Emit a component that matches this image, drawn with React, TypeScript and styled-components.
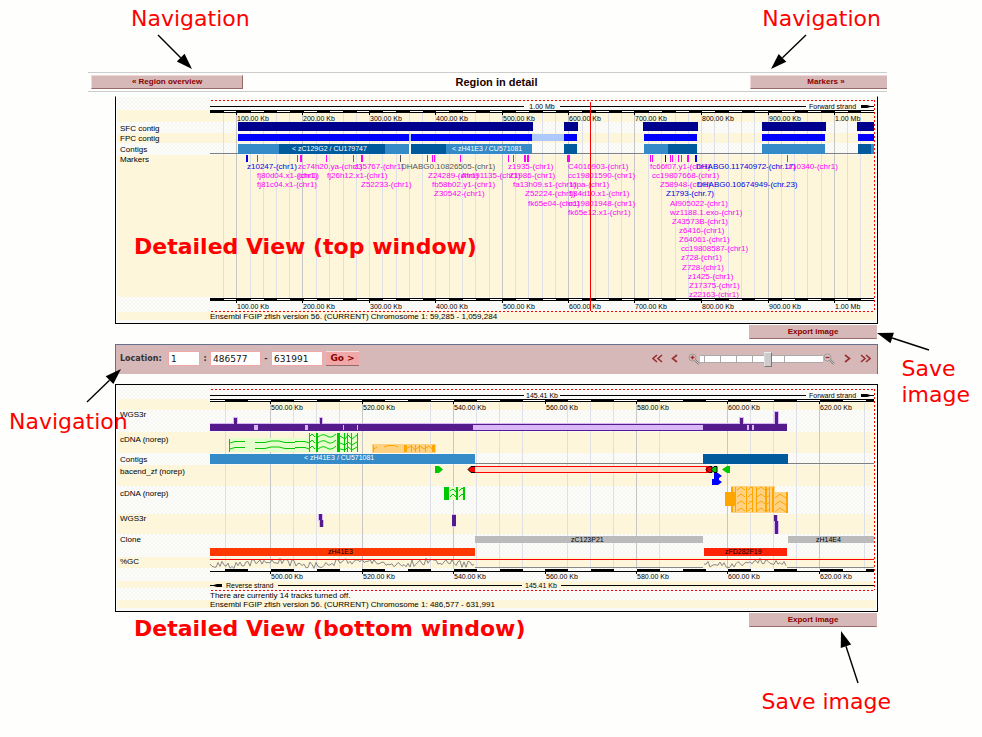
import React from 'react';
import styled, { createGlobalStyle, css } from 'styled-components';

const GlobalStyle = createGlobalStyle`
  * { box-sizing: border-box; }
  body { margin: 0; background: #fefefd; font-family: "Liberation Sans", Arial, sans-serif; color: #000; }
`;

const Page = styled.div`
  position: relative;
  min-height: 100vh;
  padding: 72px 95px 0 88px;
`;

const Heading = styled.header`
  display: grid;
  grid-template-columns: 155px 1fr 137px;
  align-items: center;
  height: 20px;
  border-top: 1px solid #ccc;
  border-bottom: 1px solid #ccc;
`;

const Title = styled.h1`
  margin: 0;
  font-size: 11px;
  line-height: 14px;
  text-align: center;
  color: #200000;
`;

const BarButton = styled.button`
  display: block;
  height: 14px;
  padding: 0;
  border: 1px solid;
  border-color: #f0d8d8 #946a6a #946a6a #f0d8d8;
  background: #d6b8b8;
  color: #8b0000;
  font: bold 8px/12px "Liberation Sans", Arial, sans-serif;
  text-align: center;
`;

const OverviewButton = styled(BarButton)`
  margin-left: 3px;
  width: 152px;
`;

const MarkersButton = styled(BarButton)`
  width: 137px;
  padding-left: 14px;
  border-right: 0;
`;

const Content = styled.main`
  display: flex;
  flex-direction: column;
  margin: 4px 9px 0 27px;
`;

const ExportButton = styled(BarButton)`
  align-self: flex-end;
  width: 128px;
  margin: 1px 1px 0 0;
  border-color: #d6b8b8 #d6b8b8 #946a6a #d6b8b8;
`;

const Panel = styled.section<{ $open?: boolean }>`
  position: relative;
  border: 1px solid #000;
  ${p => p.$open && css`border-top-color: transparent;`}
`;

const Track = styled.div<{ $h: number; $pad: number; $cream: boolean }>`
  height: ${p => p.$h}px;
  padding: ${p => p.$pad}px 0 0 3px;
  margin: 0 1px;
  font-size: 8px;
  line-height: 10px;
  white-space: nowrap;
  background: ${p => p.$cream
    ? '#fdf6da'
    : 'repeating-conic-gradient(#f7f7f3 0 25%, #fcfcfa 0 50%) 0 0 / 4px 4px'};
`;

const Plot = styled.svg`
  position: absolute;
  left: 94px;
  top: 0;
  width: calc(100% - 94px);
  height: 100%;
  overflow: visible;
  font-family: "Liberation Sans", Arial, sans-serif;
`;

const LocationBar = styled.form`
  display: flex;
  align-items: center;
  height: 30px;
  margin: 5px 0 10px;
  padding: 0 6px 2px 4px;
  border: 1px solid #66708c;
  border-bottom: 0;
  background: #d6b8b8;
  font: bold 8px/10px "DejaVu Sans", Verdana, sans-serif;
  color: #333;
`;

const Mark = styled.span`
  width: 10px;
  text-align: center;
`;

const Field = styled.input<{ $w: number }>`
  width: ${p => p.$w}px;
  height: 15px;
  padding: 0 0 0 2px;
  border: 1px solid #f0a8a8;
  border-radius: 0;
  background: #fff;
  color: #111;
  font: 9px/13px "DejaVu Sans", Verdana, sans-serif;
`;

const LocationLabel = styled.label`
  margin-right: 4px;
  width: 44px;
`;

const GoButton = styled.button`
  width: 33px;
  height: 15px;
  margin-left: 3px;
  padding: 0;
  border: 0;
  border-top: 1px solid #f8dcdc;
  border-bottom: 1px solid #946a6a;
  background: #f0a8a8;
  color: #8b0000;
  font: bold 9px/13px "DejaVu Sans", Verdana, sans-serif;
`;

const Controls = styled.div`
  display: flex;
  align-items: center;
  margin-left: auto;
`;

const IconButton = styled.button<{ $w: number; $gap: number }>`
  display: flex;
  width: ${p => p.$w}px;
  height: 14px;
  margin: 0 ${p => p.$gap}px 0 0;
  padding: 0;
  border: 0;
  background: none;
  align-items: center;
`;

const thumb = css`
  width: 8px;
  height: 15px;
  margin-top: -4px;
  border: 1px solid #999;
  border-color: #eee #777 #777 #ddd;
  border-radius: 0;
  background: #ccc;
`;

const Slider = styled.input`
  appearance: none;
  width: 123px;
  height: 15px;
  margin: 0;
  background: none;
  &::-webkit-slider-runnable-track {
    height: 8px;
    border-top: 1px solid #aaa;
    border-bottom: 1px solid #aaa;
    background: repeating-linear-gradient(90deg, transparent 0 15px, #aaa 15px 16px) 5px 0 / 82px 100% no-repeat,
      linear-gradient(90deg, transparent 4px, #aaa 4px 5px, transparent 5px) #fff;
  }
  &::-webkit-slider-thumb { appearance: none; ${thumb} }
`;

const Note = styled.p<{ $top: number; $left?: number; $right?: number; $strong?: boolean }>`
  position: absolute;
  top: ${p => p.$top}px;
  ${p => (p.$right === undefined ? `left: ${p.$left}px;` : `right: ${p.$right}px;`)}
  margin: 0;
  font-family: "DejaVu Sans", Verdana, sans-serif;
  font-size: 22px;
  line-height: 26px;
  font-weight: ${p => (p.$strong ? 'bold' : 'normal')};
  color: #f00;
  white-space: nowrap;
  pointer-events: none;
`;

const ArrowBox = styled.svg<{ $top: number; $left?: number; $right?: number }>`
  position: absolute;
  top: ${p => p.$top}px;
  ${p => (p.$right === undefined ? `left: ${p.$left}px;` : `right: ${p.$right}px;`)}
  overflow: visible;
  pointer-events: none;
`;

type ArrowProps = { dx: number; dy: number; top: number; left?: number; right?: number };

/* An arrow whose tail is dx, dy away from its tip. */
function Arrow({ dx, dy, top, left, right }: ArrowProps) {
  const w = Math.abs(dx);
  const h = Math.abs(dy);
  const tx = dx > 0 ? 0 : w;
  const ty = dy > 0 ? 0 : h;
  const len = Math.hypot(dx, dy);
  const ux = dx / len;
  const uy = dy / len;
  const bx = tx + ux * 16;
  const by = ty + uy * 16;
  return (
    <ArrowBox $top={top} $left={left} $right={right} width={w} height={h} aria-hidden="true">
      <line x1={tx + dx} y1={ty + dy} x2={bx} y2={by} stroke="#000" strokeWidth="1.4" />
      <path d={`M${tx} ${ty}L${bx - uy * 5.5} ${by + ux * 5.5}L${bx + uy * 5.5} ${by - ux * 5.5}Z`} />
    </ArrowBox>
  );
}

/* Horizontal plot positions scale with the width of the plot. */
const X0 = 210;
const SPAN = 667;
const X = (v: number) => `${((v - X0) / SPAN) * 100}%`;
const W = (v: number) => `${(v / SPAN) * 100}%`;

type Bar = [number, number, string];

function Bars({ y, h, items }: { y: number; h: number; items: Bar[] }) {
  return (
    <g shapeRendering="crispEdges">
      {items.map(([a, b, c], i) => (
        <rect key={i} x={X(a)} y={y} width={W(b - a)} height={h} fill={c} />
      ))}
    </g>
  );
}

function Label({ x, y, size = 8, fill = '#000', children }: {
  x: number; y: number; size?: number; fill?: string; children: React.ReactNode;
}) {
  return <text x={X(x)} y={y} fontSize={size} fill={fill}>{children}</text>;
}

function Glyph({ x, y, children }: { x: number; y: number; children: React.ReactNode }) {
  return <svg x={X(x)} y={y} width="1" height="1" overflow="visible">{children}</svg>;
}

function Grid({ xs, strong, y, h }: { xs: number[]; strong: number[]; y: number; h: number }) {
  return (
    <Bars y={y} h={h} items={[
      ...xs.map((x): Bar => [x, x + 1, '#dfdfe6']),
      ...strong.map((x): Bar => [x, x + 1, '#c6c6c6']),
    ]} />
  );
}

function Dots({ top, bottom }: { top: number; bottom: number }) {
  const p = { stroke: '#f00', strokeDasharray: '2 2', shapeRendering: 'crispEdges' as const };
  return (
    <>
      <line {...p} x1={X(211)} x2={X(875)} y1={top + 0.5} y2={top + 0.5} />
      <line {...p} x1={X(211)} x2={X(875)} y1={bottom + 0.5} y2={bottom + 0.5} />
      <line {...p} x1={X(874.5)} x2={X(874.5)} y1={top} y2={bottom} />
    </>
  );
}

function ForwardStrand({ y, text }: { y: number; text: string }) {
  return (
    <>
      <Bars y={y} h={1} items={[[210, 524, '#000'], [560, 806, '#000'], [865, 874, '#000']]} />
      <Bars y={y - 1} h={3} items={[[861, 867, '#000']]} />
      <Glyph x={867} y={y - 1}><path d="M0 0L5 1.5L0 3Z" /></Glyph>
      <text x={X(542)} y={y + 3} fontSize={7} textAnchor="middle">{text}</text>
      <Label x={809} y={y + 3} size={7}>Forward strand</Label>
    </>
  );
}

const BLUE = '#0000e6';
const PINK = '#ff00ff';
const GREY = '#555';
const LIGHT = '#348bc8';
const DARK = '#005a9c';
const NAVY = '#00008f';
const PURE = '#0000ff';
const PURPLE = '#551a8b';
const LILAC = '#d9b8f8';
const GREEN = '#00c800';
const ORANGE = '#ffa500';

const markerRows: [number, string, string?][][] = [
  [[247, 'z10247-(chr1)', BLUE], [298, 'zc74h20.ya-(chr1)'], [354, 'z35767-(chr1)'], [401, 'DHABG0.10826505-(chr1)', GREY],
    [508, 'z1935-(chr1)'], [568, 'C4016903-(chr1)'], [650, 'fc66f07.y1-(chr1)'], [696, 'DHABG0.11740972-(chr.17)', BLUE], [788, 'z10340-(chr1)']],
  [[257, 'fj80d04.x1-(chr1)'], [298, '(chr1)'], [327, 'fj26h12.x1-(chr1)'], [428, 'Z24289-(chr1)'], [461, 'Afm91135-(chr1)'],
    [509, 'Z1986-(chr1)'], [568, 'cc19801590-(chr1)'], [652, 'cc19807668-(chr1)']],
  [[257, 'fj81c04.x1-(chr1)'], [361, 'Z52233-(chr1)'], [432, 'fb58b02.y1-(chr1)'], [513, 'fa13h09.s1-(chr1)'],
    [570, 'tdpa-(chr1)'], [660, 'Z58948-(chr1)'], [697, 'DHABG0.10674949-(chr.23)', BLUE]],
  [[434, 'Z30542-(chr1)'], [525, 'Z52224-(chr1)'], [569, 'fj84d10.x1-(chr1)'], [666, 'Z1793-(chr.7)', BLUE]],
  [[528, 'fk65e04-(chr1)'], [568, 'cc19801948-(chr1)'], [670, 'AI905022-(chr1)']],
  [[568, 'fk65e12.x1-(chr1)'], [670, 'wz1188.1.exo-(chr1)']],
  [[672, 'Z43573B-(chr1)']],
  [[679, 'z6416-(chr1)']],
  [[679, 'Z64061-(chr1)']],
  [[681, 'cc19808587-(chr1)']],
  [[681, 'z728-(chr1)']],
  [[682, 'Z728-(chr1)']],
  [[688, 'z1425-(chr1)']],
  [[689, 'Z17375-(chr1)']],
  [[689, 'z22163-(chr1)']],
];

const markerTicks: Bar[] = [
  [246, 248, BLUE], [257, 258, PINK], [297, 298, PINK], [300, 302, PINK], [326, 327, PINK], [353, 354, PINK],
  [361, 363, PINK], [400, 401, GREY], [427, 428, PINK], [432, 433, PINK], [434, 435, PINK], [460, 461, PINK],
  [508, 509, PINK], [513, 514, PINK], [524, 526, PINK], [527, 529, PINK], [567, 570, PINK], [650, 651, PINK],
  [652, 653, PINK], [665, 666, BLUE], [670, 671, PINK], [672, 673, PINK], [678, 679, PINK], [681, 682, PINK],
  [687, 689, PINK], [695, 697, BLUE], [787, 788, PINK],
];

const topMajors = [236, 302, 369, 435, 502, 568, 634, 701, 768, 834];
const topNames = ['100.00', '200.00', '300.00', '400.00', '500.00', '600.00', '700.00', '800.00', '900.00', '1.00'];
const topMinors = Array.from({ length: 49 }, (_, i) => Math.round(223 + i * 13.28)).filter(
  x => !topMajors.some(m => Math.abs(m - x) < 3)
);

function TopAxis({ y, labelY }: { y: number; labelY: number }) {
  return (
    <>
      <Bars y={y} h={3} items={[[210, 874, '#000']]} />
      <Bars y={y + 1} h={1} items={Array.from({ length: 25 }, (_, i): Bar => {
        const a = Math.round(224 + i * 26.56);
        return [a, Math.min(a + 13, 874), '#fff'];
      })} />
      <Bars y={y} h={5} items={topMajors.map((x): Bar => [x, x + 1, '#000'])} />
      {topMajors.map((x, i) => (
        <Label key={x} x={x + 1} y={labelY} size={7}>{`${topNames[i]} ${i === 9 ? 'Mb' : 'Kb'}`}</Label>
      ))}
    </>
  );
}

function TopPlot() {
  return (
    <Plot aria-label="Contigs and markers">
      <g transform="translate(0 -97)">
        <Grid xs={[...topMinors, 369, 435, 701]} strong={[236, 302, 502, 568, 634, 768, 834]} y={113} h={185} />
        <Dots top={100} bottom={311} />
        <ForwardStrand y={106} text="1.00 Mb" />
        <TopAxis y={110} labelY={121} />
        <Bars y={122} h={9} items={[[238, 533, NAVY], [564, 578, NAVY], [643, 698, NAVY], [762, 826, NAVY], [857, 874, NAVY]]} />
        <Bars y={134} h={7} items={[[238, 532, PURE], [409, 411, '#adc8ff'], [532, 564, '#adc8ff'], [564, 577, PURE],
          [644, 697, PURE], [762, 825, PURE], [858, 874, PURE]]} />
        <Bars y={153} h={1} items={[[210, 874, '#808080']]} />
        <Bars y={144} h={10} items={[[238, 279, LIGHT], [279, 385, DARK], [385, 409, LIGHT], [409, 411, '#fff'], [411, 446, DARK],
          [446, 532, LIGHT], [564, 577, DARK], [644, 668, LIGHT], [668, 697, DARK], [762, 825, LIGHT], [858, 871, DARK], [871, 874, LIGHT]]} />
        <Label x={292} y={151} size={7} fill="#fff">&lt; zC129G2 / CU179747</Label>
        <Label x={452} y={151} size={7} fill="#fff">&lt; zH41E3 / CU571081</Label>
        <Bars y={155} h={7} items={markerTicks} />
        {markerRows.map((row, r) =>
          row.map(([x, name, color]) => (
            <Label key={`${r}${name}${x}`} x={x} y={169 + Math.round(r * 9.14)} fill={color ?? PINK}>{name}</Label>
          ))
        )}
        <TopAxis y={298} labelY={309} />
        <Bars y={102} h={209} items={[[590, 591, '#f00']]} />
        <Label x={210} y={319}>Ensembl FGIP zfish version 56. (CURRENT) Chromosome 1: 59,285 - 1,059,284</Label>
      </g>
    </Plot>
  );
}

const lowMajors = [270, 362, 453, 545, 636, 727, 819];
const lowFills = Array.from({ length: 15 }, (_, i): Bar => {
  const a = Math.round(225 + i * 45.75);
  return [a, Math.min(a + 23, 874), '#000'];
}).filter(([a]) => a < 874);

/* Pseudo-random GC percentage trace. */
function trace(width: number, seed: number) {
  let s = seed;
  let d = 'M0 6';
  for (let x = 2; x <= width; x += 2) {
    s = (s * 1103515245 + 12345) % 2147483648;
    const n = (s >> 8) % 100;
    d += `L${x} ${(5 + Math.sin(x / 13) * 2 + (n / 100 - 0.5) * 7).toFixed(1)}`;
  }
  return d;
}

function LowLabels({ y }: { y: number }) {
  return (
    <>
      {lowMajors.map((x, i) => (
        <Label key={x} x={x + 1} y={y} size={7}>{`${500 + i * 20}.00 Kb`}</Label>
      ))}
    </>
  );
}

function BottomPlot() {
  const thin = { fill: 'none', strokeWidth: 1 };
  return (
    <Plot aria-label="Region tracks">
      <g transform="translate(0 -385)">
        <Grid xs={[225, 293, 316, 339, 430, 476, 499, 522, 567, 590, 613, 659, 750, 773, 796, 864]}
          strong={[270, 362, 453, 636, 727, 819]} y={403} h={166} />
        <Dots top={389} bottom={590} />
        <ForwardStrand y={395} text="145.41 Kb" />
        <Bars y={399} h={1} items={[[210, 874, '#000']]} />
        <Bars y={400} h={1} items={[[210, 874, '#fff'], ...lowFills]} />
        <Bars y={401} h={1} items={[[210, 874, '#000']]} />
        <Bars y={401} h={3} items={lowMajors.map((x): Bar => [x, x + 1, '#000'])} />
        <LowLabels y={410} />

        <Bars y={423} h={8} items={[[210, 787, LILAC]]} />
        <Bars y={417} h={7} items={[[233, 238, LILAC], [319, 323, LILAC], [739, 744, LILAC]]} />
        <Bars y={411} h={13} items={[[774, 779, LILAC]]} />
        <Bars y={424} h={7} items={[[210, 787, PURPLE]]} />
        <Bars y={418} h={7} items={[[234, 237, PURPLE], [320, 322, PURPLE], [740, 743, PURPLE]]} />
        <Bars y={412} h={13} items={[[775, 778, PURPLE]]} />
        <Bars y={425} h={5} items={[[473, 703, LILAC], [254, 258, LILAC], [305, 308, LILAC], [343, 344, LILAC],
          [357, 358, LILAC], [747, 749, LILAC], [752, 754, LILAC]]} />

        <Bars y={438} h={14} items={[[229, 309, '#e4ffcc']]} />
        <Bars y={433} h={19} items={[[309, 358, '#e4ffcc'], [309, 310, GREEN], [316, 318, GREEN], [337, 340, GREEN],
          [344, 345, GREEN], [347, 348, GREEN], [351, 352, GREEN], [357, 358, GREEN]]} />
        <Glyph x={229} y={433}>
          <path {...thin} stroke={GREEN} d="M.5 6v13M1 10L6 8.5H16M1 16L6 14.5H16M26 9.500H36L42 8H50L56 9.500H66M26 15.500H36L42 14H50L56 15.500H66M66 8.500H76L80 10M66 14.500H76L80 16" />
          <path {...thin} stroke={GREEN} d="M80 4l3-3 3 3M80 10l3-3 3 3M80 16l3-3 3 3M89 4q5-4 9-1t9-2M89 10q5-4 9-1t9-2M89 16q5-4 9-1t9-2M111 3l5 3 3-4 4 4 5-4M111 10l5 2 3-3 4 3 5-3M111 16l5 1 3-3 4 3 5-3" />
        </Glyph>
        <Bars y={444} h={9} items={[[372, 436, '#ffd283']]} />
        <Bars y={445} h={7} items={[[373, 374, ORANGE], [404, 407, ORANGE], [411, 412, ORANGE], [415, 416, ORANGE], [419, 420, ORANGE],
          [425, 426, ORANGE], [432, 435, ORANGE]]} />
        <Glyph x={372} y={444}>
          <path {...thin} stroke={ORANGE} d="M2 5L5 3M12 3l4-1.500h6l4 1.500M34 5l5-3 4 4 5-4 4 3 5-3 4 4" />
        </Glyph>

        <Bars y={463} h={1} items={[[210, 874, '#808080']]} />
        <Bars y={454} h={10} items={[[210, 475, LIGHT], [703, 788, DARK]]} />
        <Label x={304} y={460} size={7} fill="#fff">&lt; zH41E3 / CU571081</Label>

        <Bars y={466} h={7} items={[[472, 709, '#f00']]} />
        <Bars y={467} h={5} items={[[475, 706, '#ffe0cc']]} />
        <Glyph x={435} y={466}><path fill={GREEN} d="M0 0h4l4 3.500-4 3.500h-4z" /></Glyph>
        <Glyph x={467} y={466}><path fill="#f00" stroke="#000" d="M8 .5H4L1 3.500L4 6.500H8" /></Glyph>
        <Glyph x={705} y={466}>
          <path fill="#f00" stroke="#000" d="M7 .5H4L1 3.500L4 6.500H7z" />
          <path fill={GREEN} stroke="#000" d="M12 .5H9L6 3.500L9 6.500H12z" />
          <path fill="#00f" d="M9 7h4l4 3-3 2v2l3 2-4 3h-6v-6h2z" />
          <path fill={GREEN} d="M25 0h-3l-5 3.500 5 3.500h3z" />
        </Glyph>

        <Bars y={487} h={13} items={[[444, 465, '#e4ffcc'], [444, 449, GREEN], [456, 458, GREEN], [463, 465, GREEN]]} />
        <Glyph x={444} y={487}>
          <path {...thin} stroke={GREEN} d="M6 4l3-2 3 3M6 10l3-3 3 3M15 4l3-3 3 3M15 10l3-3 3 3" />
        </Glyph>
        <Bars y={486} h={27} items={[[731, 775, '#ffd283']]} />
        <Bars y={492} h={21} items={[[774, 788, '#ffd283'], [786, 788, ORANGE]]} />
        <Bars y={492} h={14} items={[[725, 735, ORANGE]]} />
        <Bars y={487} h={25} items={[[731, 733, ORANGE], [735, 736, ORANGE], [746, 747, ORANGE], [752, 753, ORANGE], [756, 757, ORANGE],
          [765, 767, ORANGE], [769, 770, ORANGE], [772, 774, ORANGE]]} />
        <Glyph x={736} y={486}>
          {[4, 11, 18, 25].map(y => (
            <path key={y} {...thin} stroke={ORANGE} d={`M1 ${y}l4-3 4 3M12 ${y}l3-3 2 2M21 ${y}l4-3 4 3M31 ${y}l3-2${y > 4 ? `M39 ${y + 1}l5-4 6 4` : ''}`} />
          ))}
        </Glyph>

        <Bars y={514} h={7} items={[[318, 323, LILAC], [319, 322, PURPLE]]} />
        <Bars y={520} h={7} items={[[319, 324, LILAC], [320, 323, PURPLE]]} />
        <Bars y={514} h={13} items={[[452, 456, LILAC]]} />
        <Bars y={515} h={11} items={[[452, 456, PURPLE]]} />
        <Bars y={515} h={7} items={[[773, 778, LILAC], [774, 777, PURPLE]]} />
        <Bars y={521} h={13} items={[[774, 779, LILAC], [775, 778, PURPLE]]} />

        <Bars y={536} h={7} items={[[475, 703, '#bbb'], [788, 874, '#bbb']]} />
        <Label x={571} y={542} size={7}>zC123P21</Label>
        <Label x={816} y={542} size={7}>zH14E4</Label>
        <Bars y={548} h={8} items={[[210, 475, '#ff3800'], [704, 787, '#ff2408']]} />
        <Label x={328} y={554} size={7}>zH41E3</Label>
        <Label x={725} y={554} size={7}>zFD282F19</Label>

        <Glyph x={210} y={558}><path {...thin} stroke="#888" d={trace(264, 17)} /></Glyph>
        <Glyph x={704} y={558}><path {...thin} stroke="#888" d={trace(82, 5)} /></Glyph>
        <Bars y={567} h={1} items={[[475, 703, '#888'], [787, 874, '#888']]} />
        <Bars y={559} h={1} items={[[210, 874, '#f00']]} />
        <Bars y={571} h={1} items={[[210, 874, '#000']]} />
        <Bars y={569} h={2} items={lowFills} />
        <Bars y={571} h={3} items={lowMajors.map((x): Bar => [x, x + 1, '#000'])} />
        <LowLabels y={579} />

        <Bars y={585} h={1} items={[[210, 222, '#000'], [278, 522, '#000'], [561, 874, '#000']]} />
        <Bars y={584} h={3} items={[[217, 222, '#000']]} />
        <Glyph x={212} y={584}><path d="M5 0L0 1.500L5 3Z" /></Glyph>
        <Label x={226} y={588} size={7}>Reverse strand</Label>
        <Label x={525} y={588} size={7}>145.41 Kb</Label>
        <Label x={210} y={598}>There are currently 14 tracks turned off.</Label>
        <Label x={210} y={607}>Ensembl FGIP zfish version 56. (CURRENT) Chromosome 1: 486,577 - 631,991</Label>
      </g>
    </Plot>
  );
}

/* height, label, space above the label */
type TrackRow = [number, string?, number?];

const topTracks: TrackRow[] = [
  [13], [12], [11, 'SFC contig', 2], [10, 'FPC contig', 1], [12, 'Contigs', 2], [142, 'Markers', 0], [15], [8], [3],
];
const bottomTracks: TrackRow[] = [
  [14], [11], [22, 'WGS3r', 0], [21, 'cDNA (norep)', 3], [12, 'Contigs', 2], [21, 'bacend_zf (norep)', 2],
  [28, 'cDNA (norep)', 3], [20, 'WGS3r', 0], [23, 'Clone', 1], [11, '%GC', 0], [13], [7], [12], [8], [3],
];

function Tracks({ rows }: { rows: TrackRow[] }) {
  return (
    <>
      {rows.map(([h, label, pad = 0], i) => (
        <Track key={i} $h={h} $pad={pad} $cream={i % 2 === 1}>{label}</Track>
      ))}
    </>
  );
}

function Chevrons({ d, w }: { d: string; w: number }) {
  return (
    <svg width={w} height="9" viewBox={`0 0 ${w} 9`} fill="none" stroke="#983030" strokeWidth="1.6" aria-hidden="true">
      <path d={d} />
    </svg>
  );
}

function Lens({ plus }: { plus?: boolean }) {
  return (
    <svg width="12" height="12" viewBox="0 0 12 12" fill="none" aria-hidden="true">
      <circle cx="4.500" cy="4.500" r="3.500" fill="#e3c8c8" stroke="#999" />
      <path d={plus ? 'M2.500 4.500h4M4.500 2.500v4' : 'M2.500 4.500h4'} stroke="#983030" strokeWidth="1.500" />
      <path d="M7 7l4 4" stroke="#777" strokeWidth="2" />
      <path d="M7 7l4 4" stroke="#ddd" strokeWidth=".8" />
    </svg>
  );
}

export default function App() {
  return (
    <>
      <GlobalStyle />
      <Page>
        <Heading>
          <OverviewButton type="button">« Region overview</OverviewButton>
          <Title>Region in detail</Title>
          <MarkersButton type="button">Markers »</MarkersButton>
        </Heading>
        <Content>
          <Panel $open>
            <Tracks rows={topTracks} />
            <TopPlot />
          </Panel>
          <ExportButton type="button">Export image</ExportButton>
          <LocationBar onSubmit={e => e.preventDefault()}>
            <LocationLabel htmlFor="chromosome">Location:</LocationLabel>
            <Field id="chromosome" $w={32} defaultValue="1" />
            <Mark>:</Mark>
            <Field $w={51} aria-label="Start" defaultValue="486577" />
            <Mark>-</Mark>
            <Field $w={52} aria-label="End" defaultValue="631991" />
            <GoButton type="submit">Go &gt;</GoButton>
            <Controls>
              <IconButton type="button" $w={11} $gap={8} aria-label="Far left">
                <Chevrons w={11} d="M5 1L1 4.500L5 8M10 1L6 4.500L10 8" />
              </IconButton>
              <IconButton type="button" $w={7} $gap={10} aria-label="Left">
                <Chevrons w={7} d="M6 1L1.500 4.500L6 8" />
              </IconButton>
              <IconButton type="button" $w={12} $gap={0} aria-label="Zoom in"><Lens plus /></IconButton>
              <Slider type="range" min={0} max={100} defaultValue={56} aria-label="Zoom" />
              <IconButton type="button" $w={12} $gap={9} aria-label="Zoom out"><Lens /></IconButton>
              <IconButton type="button" $w={7} $gap={9} aria-label="Right">
                <Chevrons w={7} d="M1 1L5.500 4.500L1 8" />
              </IconButton>
              <IconButton type="button" $w={11} $gap={0} aria-label="Far right">
                <Chevrons w={11} d="M1 1L5 4.500L1 8M6 1L10 4.500L6 8" />
              </IconButton>
            </Controls>
          </LocationBar>
          <Panel>
            <Tracks rows={bottomTracks} />
            <BottomPlot />
          </Panel>
          <ExportButton type="button">Export image</ExportButton>
        </Content>

        <Note $top={6} $left={131}>Navigation</Note>
        <Note $top={6} $right={101}>Navigation</Note>
        <Note $top={409} $left={9}>Navigation</Note>
        <Note $top={234} $left={134} $strong>Detailed View (top window)</Note>
        <Note $top={616} $left={134} $strong>Detailed View (bottom window)</Note>
        <Note $top={356} $right={12}>Save<br />image</Note>
        <Note $top={689} $right={91}>Save image</Note>
        <Arrow dx={-34} dy={-34} top={35} left={158} />
        <Arrow dx={35} dy={-34} top={35} right={176} />
        <Arrow dx={-34} dy={33} top={369} left={87} />
        <Arrow dx={52} dy={17} top={333} right={53} />
        <Arrow dx={17} dy={52} top={631} right={124} />
      </Page>
    </>
  );
}
